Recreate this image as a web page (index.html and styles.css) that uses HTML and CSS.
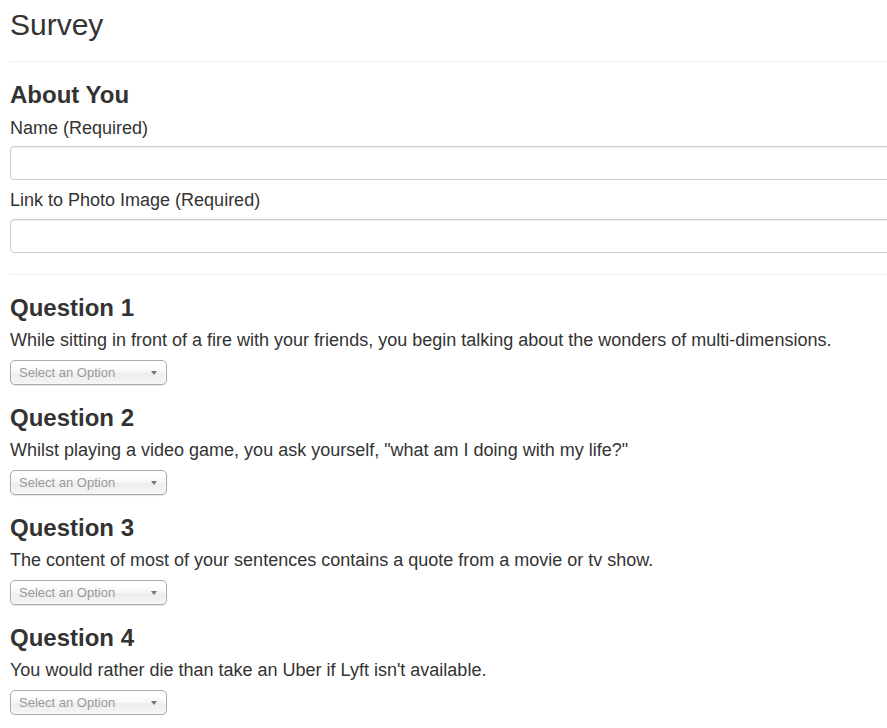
FILE: index.html
```html
<!DOCTYPE html>
<html lang="en">
<head>
<meta charset="utf-8">
<title>Survey</title>
<link rel="stylesheet" href="styles.css">
</head>
<body>
<div class="page">
  <h2 class="title">Survey</h2>
  <hr class="rule rule-top">
  <section class="about">
    <h3 class="heading">About You</h3>
    <div class="field">
      <label class="label" for="name">Name (Required)</label>
      <input class="text-input" id="name" type="text">
    </div>
    <div class="field">
      <label class="label" for="photo">Link to Photo Image (Required)</label>
      <input class="text-input" id="photo" type="text">
    </div>
  </section>
  <hr class="rule rule-mid">
  <section class="question">
    <h3 class="heading">Question 1</h3>
    <p class="prompt">While sitting in front of a fire with your friends, you begin talking about the wonders of multi-dimensions.</p>
    <div class="chosen"><span class="chosen-text">Select an Option</span><b class="chosen-arrow"></b></div>
  </section>
  <section class="question">
    <h3 class="heading">Question 2</h3>
    <p class="prompt">Whilst playing a video game, you ask yourself, "what am I doing with my life?"</p>
    <div class="chosen"><span class="chosen-text">Select an Option</span><b class="chosen-arrow"></b></div>
  </section>
  <section class="question">
    <h3 class="heading">Question 3</h3>
    <p class="prompt">The content of most of your sentences contains a quote from a movie or tv show.</p>
    <div class="chosen"><span class="chosen-text">Select an Option</span><b class="chosen-arrow"></b></div>
  </section>
  <section class="question">
    <h3 class="heading">Question 4</h3>
    <p class="prompt">You would rather die than take an Uber if Lyft isn't available.</p>
    <div class="chosen"><span class="chosen-text">Select an Option</span><b class="chosen-arrow"></b></div>
  </section>
</div>
</body>
</html>
```
FILE: styles.css
```css
html {
  overflow: hidden;
}
body {
  margin: 0;
  background: #fff;
  color: #333;
  font-family: "Liberation Sans", Arial, sans-serif;
  font-size: 18px;
}
.page {
  width: 980px;
  padding-left: 10px;
  padding-top: 8px;
}
.title {
  margin: 0;
  font-size: 30px;
  font-weight: 400;
  line-height: 34px;
  color: #333;
}
.rule {
  margin: 20px 0 0;
  border: 0;
  border-top: 1px solid #eee;
  height: 0;
}
.rule-top {
  margin-top: 19px;
}
.rule-mid {
  margin-top: 21px;
}
.heading {
  margin: 0;
  font-size: 24px;
  font-weight: 700;
  line-height: 26px;
  color: #333;
}
.about {
  margin-top: 20px;
}
.field {
  margin-top: 7px;
}
.field + .field {
  margin-top: 7px;
}
.label {
  display: block;
  font-size: 18px;
  line-height: 26px;
  margin-bottom: 5px;
}
.field + .field .label {
  margin-bottom: 6px;
}
.text-input {
  display: block;
  box-sizing: border-box;
  width: 100%;
  height: 34px;
  margin: 0;
  padding: 6px 12px;
  border: 1px solid #ccc;
  border-radius: 4px;
  background: #fff;
  box-shadow: inset 0 1px 1px rgba(0, 0, 0, 0.075);
  font: inherit;
}
.question {
  margin-top: 20px;
}
.prompt {
  margin: 6px 0 0;
  font-size: 18px;
  line-height: 26px;
}
.chosen {
  position: relative;
  box-sizing: border-box;
  width: 157px;
  height: 25px;
  margin-top: 7px;
  padding-left: 8px;
  border: 1px solid #aaa;
  border-radius: 5px;
  background: linear-gradient(#fff 20%, #f6f6f6 50%, #eee 52%, #f4f4f4 100%);
  box-shadow: inset 0 0 3px #fff, 0 1px 1px rgba(0, 0, 0, 0.1);
  font-size: 13px;
  line-height: 23px;
  color: #999;
}
.chosen-arrow {
  position: absolute;
  right: 9px;
  top: 10px;
  width: 0;
  height: 0;
  border-left: 3px solid transparent;
  border-right: 3px solid transparent;
  border-top: 4px solid #777;
}
```
